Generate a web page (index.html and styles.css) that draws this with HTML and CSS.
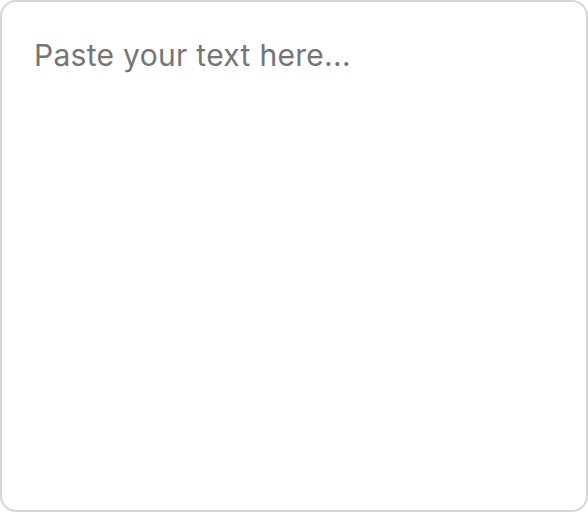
FILE: index.html
```html
<!DOCTYPE html>
<html>
<head>
<meta charset="utf-8">
<link rel="stylesheet" href="styles.css">
</head>
<body>
<textarea class="input" placeholder="Paste your text here..."></textarea>
</body>
</html>
```
FILE: styles.css
```css
html, body { margin: 0; padding: 0; background: #fff; }
body { width: 588px; height: 512px; }
.input {
  display: block;
  box-sizing: border-box;
  width: 588px;
  height: 512px;
  margin: 0;
  padding: 32px 32px;
  border: 2px solid #d6d6d6;
  border-radius: 16px;
  font-family: Inter, "Noto Sans", sans-serif;
  font-size: 30px;
  letter-spacing: 0.3px;
  line-height: 1.4;
  color: #333;
  resize: none;
  outline: none;
  background: #fff;
}
.input::placeholder { color: #757575; opacity: 1; }
```
